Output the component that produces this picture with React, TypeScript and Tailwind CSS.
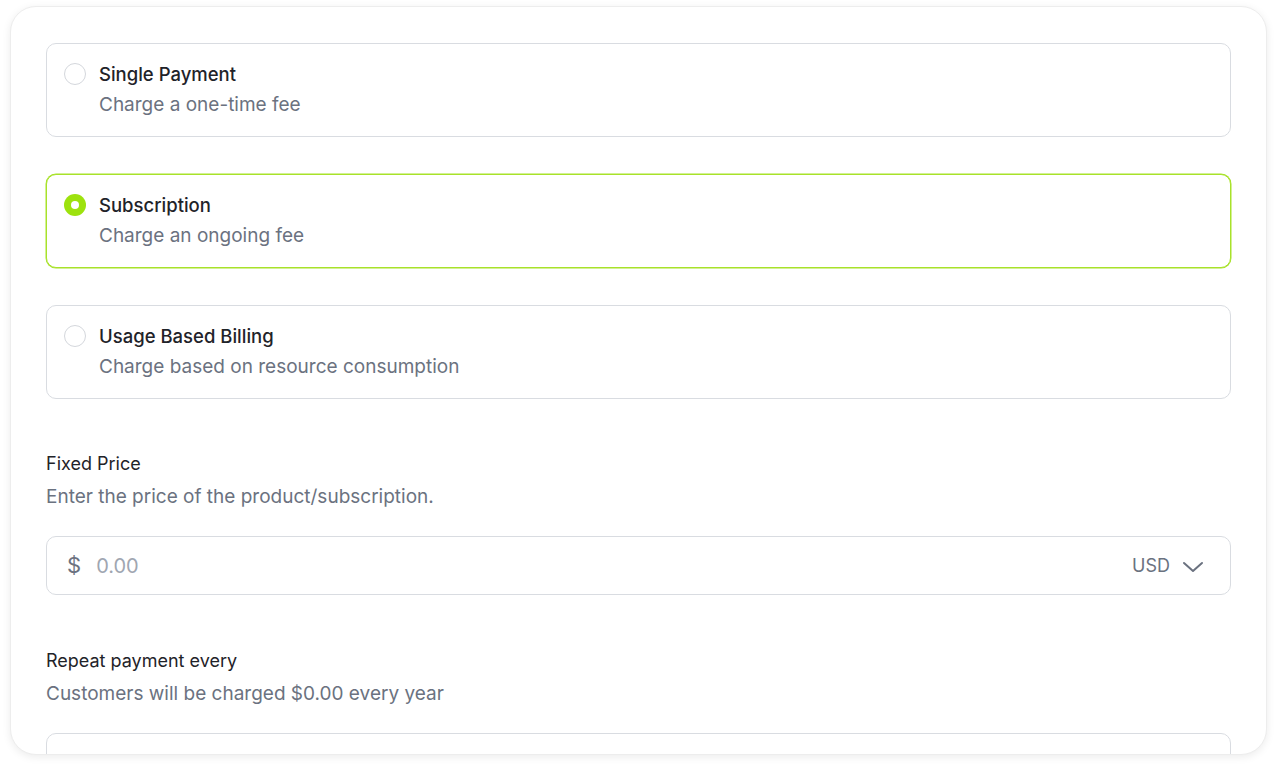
import React from "react";

type Opt = { title: string; desc: string; selected?: boolean };

const options: Opt[] = [
  { title: "Single Payment", desc: "Charge a one-time fee" },
  { title: "Subscription", desc: "Charge an ongoing fee", selected: true },
  { title: "Usage Based Billing", desc: "Charge based on resource consumption" },
];

function Radio({ selected }: { selected?: boolean }) {
  if (selected) {
    return (
      <span className="flex h-[22px] w-[22px] shrink-0 items-center justify-center rounded-full bg-[#9de20e]">
        <span className="block h-[8px] w-[8px] rounded-full bg-white" />
      </span>
    );
  }
  return <span className="block h-[22px] w-[22px] shrink-0 rounded-full border border-[#d4d7dc] bg-white" />;
}

function Chevron() {
  return (
    <svg width="22" height="14" viewBox="0 0 22 14" fill="none" className="text-[#6b7280]">
      <path d="M2 3l9 8 9-8" stroke="currentColor" strokeWidth="2" strokeLinecap="round" strokeLinejoin="round" />
    </svg>
  );
}

export default function App() {
  return (
    <div className="min-h-[770px] bg-white font-['Inter',sans-serif]">
      <div className="mx-[10px] mt-[6px] h-[749px] overflow-hidden rounded-[26px] border border-[#ededed] bg-white px-[35px] pt-[36px] shadow-[0_2px_8px_rgba(0,0,0,0.08)]">
        <div className="flex flex-col gap-[37px]">
          {options.map((o) => (
            <div
              key={o.title}
              className={`flex h-[94px] items-start gap-[13px] rounded-[10px] border bg-white pl-[17px] pt-[18px] ${
                o.selected ? "border-[#a8e22a] shadow-[0_0_0_0.5px_#a8e22a]" : "border-[#d9dce1]"
              }`}
            >
              <div className="mt-[1px]">
                <Radio selected={o.selected} />
              </div>
              <div className="flex flex-col">
                <span className="text-[18.5px] font-medium leading-[24px] text-[#1f2329]">{o.title}</span>
                <span className="mt-[7px] text-[19px] leading-[24px] text-[#6b7280]">{o.desc}</span>
              </div>
            </div>
          ))}
        </div>

        <div className="mt-[53px]">
          <div className="text-[18px] leading-[24px] text-[#1f2329]">Fixed Price</div>
          <div className="mt-[9px] text-[19px] leading-[24px] text-[#6b7280]">
            Enter the price of the product/subscription.
          </div>
          <div className="mt-[27px] flex h-[59px] items-center rounded-[10px] border border-[#d9dce1] pl-[20px] pr-[26px]">
            <span className="text-[22px] text-[#6b7280]">$</span>
            <span className="ml-[15px] text-[20px] text-[#a0a6b1]">0.00</span>
            <span className="ml-auto text-[18px] text-[#6b7280]">USD</span>
            <span className="ml-[12px] mt-[2px]">
              <Chevron />
            </span>
          </div>
        </div>

        <div className="mt-[54px]">
          <div className="text-[18px] leading-[24px] text-[#1f2329]">Repeat payment every</div>
          <div className="mt-[9px] text-[19px] leading-[24px] text-[#6b7280]">
            Customers will be charged $0.00 every year
          </div>
          <div className="mt-[27px] flex h-[59px] items-center rounded-[10px] border border-[#d9dce1] pl-[20px] pr-[26px]">
            <span className="text-[18px] text-[#1f2329]">1</span>
            <span className="ml-auto text-[18px] text-[#1f2329]">Year</span>
            <span className="ml-[12px] mt-[2px]">
              <Chevron />
            </span>
          </div>
        </div>
      </div>
    </div>
  );
}
